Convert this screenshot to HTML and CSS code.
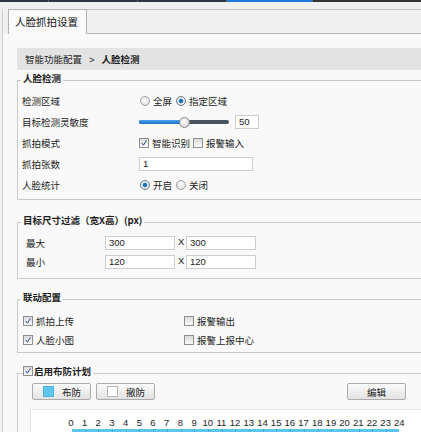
FILE: index.html
```html
<!DOCTYPE html>
<html lang="zh-CN">
<head>
    <meta charset="UTF-8">
    <title>人脸抓拍设置</title>
    <link rel="stylesheet" href="styles.css">
</head>
<body>
    <div class="topbar">
        <span class="seg"></span>
        <span class="seg"></span>
        <span class="seg"></span>
        <span class="seg active"></span>
        <span class="seg last"></span>
    </div>
    <div class="shell">
        <div class="tabbar">
            <span class="tab-gap"></span>
            <div class="tab">人脸抓拍设置</div>
            <div class="tab-fill"></div>
        </div>
        <div class="content">
            <div class="crumbs">
                <span>智能功能配置</span><span class="sep">&gt;</span><b>人脸检测</b>
            </div>

            <fieldset class="group g-detect">
                <legend>人脸检测</legend>
                <div class="form">
                    <label>检测区域</label>
                    <div class="ctl">
                        <span class="radio"></span><span class="opt">全屏</span>
                        <span class="radio on"></span><span class="opt">指定区域</span>
                    </div>

                    <label>目标检测灵敏度</label>
                    <div class="ctl">
                        <div class="slider">
                            <span class="fill"></span>
                            <span class="thumb"></span>
                        </div>
                        <span class="input small">50</span>
                    </div>

                    <label>抓拍模式</label>
                    <div class="ctl">
                        <span class="check on"><svg viewBox="0 0 9 9"><path d="M2 4.5 L3.8 7 L7.2 1.6" fill="none" stroke="#2b4c90" stroke-width="1.1"/></svg></span><span class="opt">智能识别</span>
                        <span class="check"></span><span class="opt">报警输入</span>
                    </div>

                    <label>抓拍张数</label>
                    <div class="ctl"><span class="input wide">1</span></div>

                    <label>人脸统计</label>
                    <div class="ctl">
                        <span class="radio on"></span><span class="opt">开启</span>
                        <span class="radio"></span><span class="opt">关闭</span>
                    </div>
                </div>
            </fieldset>

            <fieldset class="group g-size">
                <legend>目标尺寸过滤（宽X高）(px)</legend>
                <div class="size-grid">
                    <label>最大</label>
                    <div class="ctl"><span class="input mid">300</span><span class="x">X</span><span class="input mid">300</span></div>
                    <label>最小</label>
                    <div class="ctl"><span class="input mid">120</span><span class="x">X</span><span class="input mid">120</span></div>
                </div>
            </fieldset>

            <fieldset class="group g-link">
                <legend>联动配置</legend>
                <div class="link-grid">
                    <div class="ctl"><span class="check on"><svg viewBox="0 0 9 9"><path d="M2 4.5 L3.8 7 L7.2 1.6" fill="none" stroke="#2b4c90" stroke-width="1.1"/></svg></span><span class="opt">抓拍上传</span></div>
                    <div class="ctl"><span class="check"></span><span class="opt">报警输出</span></div>
                    <div class="ctl"><span class="check on"><svg viewBox="0 0 9 9"><path d="M2 4.5 L3.8 7 L7.2 1.6" fill="none" stroke="#2b4c90" stroke-width="1.1"/></svg></span><span class="opt">人脸小图</span></div>
                    <div class="ctl"><span class="check"></span><span class="opt">报警上报中心</span></div>
                </div>
            </fieldset>

            <fieldset class="group g-plan">
                <legend><span class="check on"><svg viewBox="0 0 9 9"><path d="M2 4.5 L3.8 7 L7.2 1.6" fill="none" stroke="#2b4c90" stroke-width="1.1"/></svg></span>启用布防计划</legend>
                <div class="plan">
                    <div class="toolbar">
                        <span class="btn"><i class="swatch arm"></i>布防</span>
                        <span class="btn"><i class="swatch"></i>撤防</span>
                        <span class="btn edit">编辑</span>
                    </div>
                    <div class="timeline">
                        <div class="hours">
                            <span>0</span><span>1</span><span>2</span><span>3</span><span>4</span>
                            <span>5</span><span>6</span><span>7</span><span>8</span><span>9</span>
                            <span>10</span><span>11</span><span>12</span><span>13</span><span>14</span>
                            <span>15</span><span>16</span><span>17</span><span>18</span><span>19</span>
                            <span>20</span><span>21</span><span>22</span><span>23</span><span>24</span>
                        </div>
                        <div class="bar"></div>
                    </div>
                </div>
            </fieldset>
        </div>
    </div>
</body>
</html>
```

FILE: styles.css
```css
html, body {
    margin: 0;
    padding: 0;
    overflow: hidden;
    background: #f0f0f0;
    font-family: "Noto Sans CJK SC", "Liberation Sans", sans-serif;
    font-size: 9.5px;
    color: #1c1c1c;
}
.topbar {
    display: flex;
    height: 2px;
}
.topbar .seg {
    width: 88px;
    background: #2f3741;
    border-left: 1px solid #56606a;
}
.topbar .seg:first-child {
    width: 48px;
    border-left: none;
}
.topbar .seg.active {
    width: 85px;
    background: #1f78dc;
}
.topbar .seg.last {
    flex: 1;
    background: #333;
}
.shell {
    width: 700px;
    margin-left: 2px;
    border-left: 1px solid #cdcdcd;
    margin-top: 7px;
}
.tabbar {
    display: flex;
    height: 25px;
}
.tab-gap {
    width: 5px;
}
.tab {
    width: 71px;
    padding-left: 6px;
    border: 1px solid #b4b4b4;
    border-bottom: none;
    background: #fafafa;
    font-size: 10.5px;
    line-height: 24px;
    color: #111;
}
.tab-fill {
    flex: 1;
    border-top: 1px solid #c4c4c4;
    border-bottom: 1px solid #b8b8b8;
    background: #f0f0f0;
}
.content {
    background: #f9f9f9;
    padding: 14px 0 40px 14px;
}
.crumbs {
    height: 22px;
    line-height: 22px;
    background: #e3e3e3;
    padding-left: 8px;
}
.crumbs .sep {
    margin: 0 7px;
    font-family: "Liberation Sans", sans-serif;
}
.crumbs b {
    font-weight: 700;
}

.group {
    margin: 0;
    padding: 0;
    border: 1px solid #cacaca;
    min-width: 0;
}
.group legend {
    margin-left: 3px;
    padding: 0 2px 4px;
    line-height: 12px;
    font-weight: 700;
}
.g-detect { margin-top: 2px; }
.g-size { margin-top: 14px; }
.g-link { margin-top: 12px; }
.g-plan { margin-top: 12px; }

.ctl {
    display: flex;
    align-items: center;
}
.form {
    display: grid;
    grid-template-columns: 117px auto;
    grid-auto-rows: 21px;
    align-items: center;
    padding: 2px 0 4px 4px;
}
.opt {
    margin: 0 3px 0 3px;
}
.radio {
    width: 8px;
    height: 8px;
    border-radius: 50%;
    border: 1px solid #a0a0a0;
    background: radial-gradient(circle at 50% 40%, #ffffff, #d8d8d8);
    margin-left: 1px;
}
.radio.on {
    border-color: #6a7a8a;
    background: radial-gradient(circle, #1f5e9c 0, #2f7fc4 2px, #ffffff 2.8px, #dcdcdc 4px);
}
.check {
    display: inline-block;
    width: 8px;
    height: 8px;
    border: 1px solid #8e8e8e;
    background: linear-gradient(#dcdcdc, #f8f8f8);
}
.check svg {
    display: block;
    width: 8px;
    height: 8px;
}
.slider {
    position: relative;
    width: 90px;
    height: 4px;
    border-radius: 2px;
    background: #4a545e;
}
.slider .fill {
    display: block;
    width: 45px;
    height: 4px;
    border-radius: 2px 0 0 2px;
    background: linear-gradient(#4aa3ec, #1d6fc0);
}
.slider .thumb {
    position: absolute;
    left: 40px;
    top: -3px;
    width: 9px;
    height: 9px;
    border-radius: 50%;
    border: 1px solid #8a8a8a;
    background: radial-gradient(circle at 40% 35%, #ffffff, #c9c9c9);
}
.input {
    display: inline-block;
    box-sizing: border-box;
    height: 14px;
    line-height: 12px;
    padding-left: 3px;
    border: 1px solid #cdcdcd;
    background: #fff;
    font-family: "Liberation Sans", sans-serif;
    color: #222;
}
.input.small {
    width: 24px;
    margin-left: 6px;
}
.input.wide {
    width: 114px;
}
.input.mid {
    width: 70px;
}
.x {
    width: 11px;
    padding-left: 3px;
    box-sizing: border-box;
    font-family: "Liberation Sans", sans-serif;
    margin-top: -3px;
}
.size-grid {
    display: grid;
    grid-template-columns: 79px auto;
    grid-auto-rows: 19px;
    align-items: center;
    padding: 3px 0 7px 8px;
}
.link-grid {
    display: grid;
    grid-template-columns: 161px auto;
    grid-auto-rows: 19px;
    align-items: center;
    padding: 4px 0 3px 5px;
}
.g-plan legend {
    display: flex;
    align-items: center;
    padding-left: 0;
    margin-left: 5px;
}
.g-plan legend .check {
    margin-right: 1px;
}
.plan {
    padding: 2px 0 0 12px;
}
.toolbar {
    display: flex;
    width: 374px;
    margin-left: 2px;
    gap: 5px;
}
.btn {
    display: flex;
    align-items: center;
    box-sizing: border-box;
    width: 59px;
    height: 17px;
    padding-left: 10px;
    border: 1px solid #acacac;
    border-radius: 2px;
    background: linear-gradient(#fbfbfb, #e2e2e2);
}
.btn .swatch {
    width: 9px;
    height: 9px;
    border: 1px solid #b8b8b8;
    background: #fff;
    margin-right: 8px;
}
.btn .swatch.arm {
    background: #5cc6ee;
    border-color: #4fb2d8;
}
.btn.edit {
    margin-left: auto;
    justify-content: center;
    padding-left: 0;
}
.timeline {
    margin-top: 9px;
    background: #fff;
    border-top: 1px solid #e6e6e6;
    border-left: 1px solid #e6e6e6;
    padding: 7px 0 0 33px;
    height: 40px;
}
.hours {
    display: flex;
    font-family: "Liberation Sans", sans-serif;
    font-size: 9.5px;
    line-height: 12px;
}
.hours span {
    width: 13.7px;
    text-align: center;
    flex: none;
}
.bar {
    width: 327px;
    height: 12px;
    margin-left: 8px;
    background: repeating-linear-gradient(90deg, #5cc6ee 0, #5cc6ee 12.7px, #4aa9cf 12.7px, #4aa9cf 13.7px);
}
```
